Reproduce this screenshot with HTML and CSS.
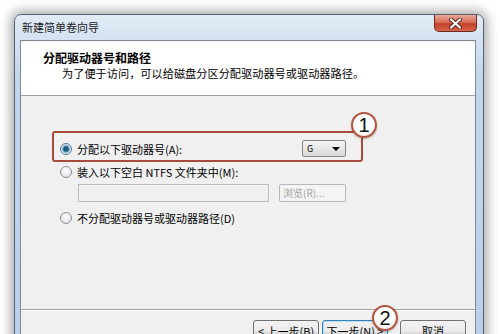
FILE: index.html
```html
<!DOCTYPE html>
<html lang="zh-CN">
<head>
  <meta charset="UTF-8">
  <meta name="viewport" content="width=device-width, initial-scale=1.0">
  <title>新建简单卷向导</title>
  <link rel="stylesheet" href="styles.css">
</head>
<body>
  <div class="window">
    <div class="titlebar">
      <span class="title">新建简单卷向导</span>
      <span class="close">
        <svg width="13" height="11" viewBox="0 0 13 11">
          <path d="M2 1.5 L11 9.5 M11 1.5 L2 9.5" stroke="#5a2016" stroke-width="4" stroke-linecap="round"/>
          <path d="M2 1.5 L11 9.5 M11 1.5 L2 9.5" stroke="#fff" stroke-width="2.2" stroke-linecap="round"/>
        </svg>
      </span>
    </div>

    <div class="client">
      <div class="header">
        <div class="h-title">分配驱动器号和路径</div>
        <div class="h-sub">为了便于访问，可以给磁盘分区分配驱动器号或驱动器路径。</div>
      </div>

      <div class="body">
        <div class="opt opt-marked">
          <span class="radio checked"></span>
          <span class="label">分配以下驱动器号(A):</span>
          <span class="select">G<span class="arrow"></span></span>
        </div>
        <div class="opt">
          <span class="radio"></span>
          <span class="label">装入以下空白 NTFS 文件夹中(M):</span>
        </div>
        <div class="path-row">
          <span class="field"></span>
          <span class="btn-browse">浏览(R)...</span>
        </div>
        <div class="opt">
          <span class="radio"></span>
          <span class="label">不分配驱动器号或驱动器路径(D)</span>
        </div>
      </div>

      <div class="footer">
        <span class="btn">&lt; 上一步(B)</span>
        <span class="btn btn-default">下一步(N) &gt;</span>
        <span class="btn btn-cancel">取消</span>
      </div>
    </div>

    <span class="mark mark-1">1</span>
    <span class="mark mark-2">2</span>
  </div>
</body>
</html>
```

FILE: styles.css
```css
body {
  margin: 0;
  background: #ffffff;
  font-family: "Noto Sans CJK SC", "Liberation Sans", sans-serif;
  color: #000;
  overflow: hidden;
  height: 334px;
}
.window {
  position: relative;
  box-sizing: border-box;
  margin: 14px 0 0 14px;
  width: 470px;
  height: 340px;
  border: 1px solid #56606c;
  border-radius: 7px 7px 0 0;
  padding: 0 7px 0 5px;
  background: linear-gradient(#e2ebf5, #d3e2f1 26px, #c2d7ee 60px, #b8d0eb);
  box-shadow: 0 0 12px 3px rgba(0, 0, 0, 0.35);
}
.titlebar {
  height: 25px;
  display: flex;
  justify-content: space-between;
  align-items: flex-start;
}
.title {
  font-size: 11px;
  line-height: 25px;
  padding-left: 2px;
  color: #1c1c1c;
}
.close {
  width: 43px;
  height: 17px;
  margin-right: -1px;
  box-sizing: border-box;
  border: 1px solid #6e2a1c;
  border-top: none;
  border-radius: 0 0 5px 5px;
  background: linear-gradient(#e9a797, #d7705a 45%, #c3432b 55%, #d6644a);
  display: flex;
  justify-content: center;
  align-items: center;
}
.client {
  border: 1px solid #7d8996;
  background: #f0f0f0;
}
.header {
  height: 55px;
  box-sizing: border-box;
  background: #ffffff;
  border-bottom: 1px solid #a0a0a0;
  padding: 9px 0 0 22px;
}
.h-title {
  font-size: 12px;
  font-weight: bold;
  line-height: 15px;
}
.h-sub {
  font-size: 11.2px;
  line-height: 14px;
  padding-left: 19px;
  margin-top: 1px;
}
.body {
  height: 213px;
  box-sizing: border-box;
  padding: 35px 0 0 31px;
  font-size: 11px;
}
.opt {
  display: flex;
  align-items: center;
  height: 14px;
  margin-left: 8px;
}
.opt-marked {
  box-sizing: border-box;
  width: 311px;
  height: 31px;
  margin: 0 0 3px 0;
  padding: 6px 15px 2px 6px;
  border: 2px solid #a84a3c;
  border-radius: 3px;
}
.path-row + .opt {
  margin-top: 9px;
}
.radio {
  width: 12px;
  height: 12px;
  box-sizing: border-box;
  border-radius: 50%;
  border: 1px solid #8d9094;
  background: radial-gradient(circle at 50% 40%, #ffffff, #dadcde);
  margin-right: 5px;
  flex: none;
}
.radio.checked {
  border-color: #577a93;
  background: radial-gradient(circle, #1f5a7c 0 2px, #4e8fb4 3px, #bcd6e6 4px, #f2f6f9 5px);
}
.label {
  line-height: 14px;
  white-space: nowrap;
}
.select {
  margin-left: auto;
  width: 44px;
  height: 17px;
  box-sizing: border-box;
  border: 1px solid #858585;
  border-radius: 2px;
  background: linear-gradient(#f6f6f6, #e6e6e6 50%, #d8d8d8);
  display: flex;
  align-items: center;
  padding: 0 5px 0 4px;
  font-size: 9px;
}
.arrow {
  margin-left: auto;
  width: 0;
  height: 0;
  border-left: 4px solid transparent;
  border-right: 4px solid transparent;
  border-top: 4px solid #000;
}
.path-row {
  display: flex;
  margin: 5px 0 0 26px;
  height: 18px;
}
.field {
  width: 191px;
  box-sizing: border-box;
  border: 1px solid #bcbcbc;
  background: #f0f0f0;
}
.btn-browse {
  margin-left: 10px;
  width: 67px;
  box-sizing: border-box;
  border: 1px solid #b5b9bc;
  border-radius: 2px;
  background: #f4f4f4;
  color: #a3a3a3;
  line-height: 16px;
  padding-left: 3px;
  font-size: 10px;
}
.footer {
  border-top: 1px solid #a0a0a0;
  box-shadow: inset 0 1px 0 #ffffff;
  height: 40px;
  display: flex;
  justify-content: flex-end;
  padding: 10px 9px 0 0;
}
.btn {
  width: 66px;
  height: 23px;
  box-sizing: border-box;
  border: 1px solid #707070;
  border-radius: 3px;
  background: linear-gradient(#f2f2f2, #ebebeb 50%, #dddddd 51%, #cfcfcf);
  font-size: 11px;
  text-align: center;
  line-height: 21px;
  margin-left: 3px;
}
.btn-default {
  border-color: #3c7fb1;
  box-shadow: inset 0 0 0 1px #aee2f7;
}
.btn-cancel {
  margin-left: 12px;
}
.mark {
  position: absolute;
  width: 26px;
  height: 26px;
  box-sizing: border-box;
  border-radius: 50%;
  border: 2px solid #b1533c;
  background: radial-gradient(circle at 50% 35%, #ffffff 55%, #eedbd5);
  box-shadow: 0 1px 2px rgba(0, 0, 0, 0.25);
  font-family: "Liberation Sans", sans-serif;
  font-size: 20px;
  line-height: 23px;
  text-align: center;
  color: #111;
}
.mark-1 {
  left: 336px;
  top: 97px;
}
.mark-2 {
  left: 357px;
  top: 290px;
}
```
